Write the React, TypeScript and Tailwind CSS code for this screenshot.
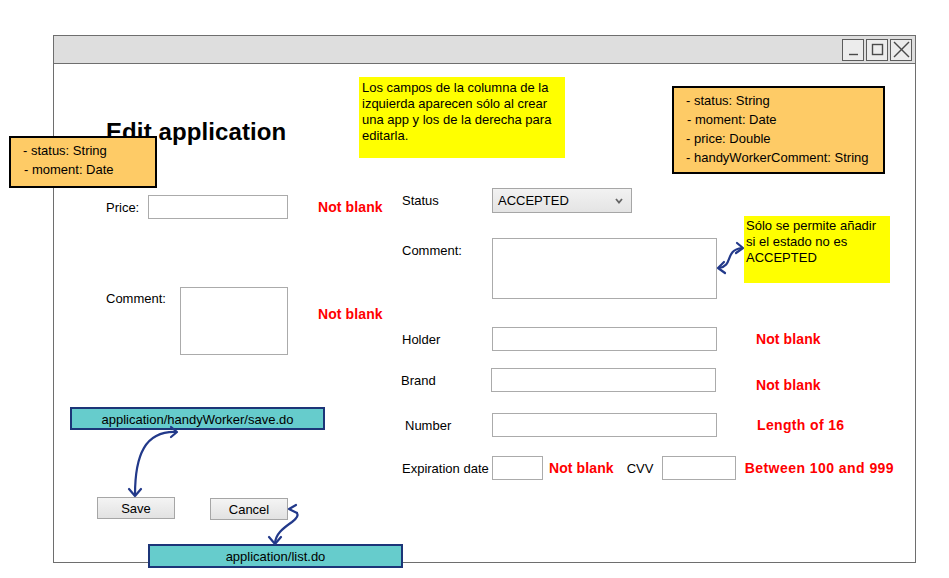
import React from 'react'

const navy = '#22398a'

function TitleButton({ children }: { children: React.ReactNode }) {
  return (
    <div className="w-[22px] h-[22px] border-[1.5px] border-[#5c5c5c] bg-[#ececec] flex items-center justify-center">
      <svg width="19" height="19" viewBox="0 0 19 19" fill="none" stroke="#4a4a4a" strokeWidth="1.4">
        {children}
      </svg>
    </div>
  )
}

function Field({ className }: { className: string }) {
  return <div className={`border border-[#ababab] bg-white ${className}`} />
}

function Arrows() {
  return (
    <svg className="absolute left-0 top-0 pointer-events-none" width="949" height="578" fill="none" stroke={navy} strokeWidth="2.2" strokeLinecap="round" strokeLinejoin="round">
      {/* save.do <-> Save */}
      <path d="M176 432 C145 431 135 455 135 495" />
      <polyline points="171,427 177,432 171,437" />
      <polyline points="129,489 135,496 141,489" />
      {/* Cancel <-> list.do */}
      <polyline points="296,505 289,509 297,513" />
      <path d="M297 513 C299 516 296 519 292 522 C282 529 276 534 275 543" />
      <polyline points="269,537 275,544 281,537" />
      {/* comment <-> note */}
      <path d="M719 268 C734 266 724 250 742 248" />
      <polyline points="724,262 718,268 725,273" />
      <polyline points="737,243 743,248 736,253" />
    </svg>
  )
}

export default function App() {
  return (
    <div className="relative w-[949px] h-[578px] overflow-hidden bg-white pt-[35px] pl-[53px] font-['Liberation_Sans',Arial,sans-serif] text-[13px] leading-[16px] text-black">
      {/* Window */}
      <div className="w-[863px] h-[528px] border border-[#6e6e6e] flex flex-col">
        <div className="h-[28px] bg-[#dedede] border-b border-[#6e6e6e] flex items-center justify-end gap-[2px] pr-[3px]">
          <TitleButton>
            <line x1="5" y1="14.5" x2="14" y2="14.5" />
          </TitleButton>
          <TitleButton>
            <rect x="4.5" y="4.5" width="10" height="10" />
          </TitleButton>
          <TitleButton>
            <line x1="2" y1="2" x2="17" y2="17" />
            <line x1="17" y1="2" x2="2" y2="17" />
          </TitleButton>
        </div>

        <div className="flex flex-1">
          {/* Left column */}
          <div className="w-[341px] flex flex-col">
            <h1 className="mt-[54px] ml-[52px] text-[24px] leading-[28px] font-bold tracking-[0.1px]">Edit application</h1>
            <div className="mt-[49px] ml-[52px] flex items-center h-[24px]">
              <span className="w-[42px] pt-[1px]">Price:</span>
              <Field className="w-[140px] h-[24px]" />
              <span className="ml-[30px] text-[14px] font-bold text-[#ff0000] tracking-[0.1px]">Not blank</span>
            </div>
            <div className="mt-[68px] ml-[52px] flex items-start">
              <span className="w-[74px] mt-[4px]">Comment:</span>
              <Field className="w-[108px] h-[68px]" />
              <span className="ml-[30px] mt-[19px] text-[14px] font-bold text-[#ff0000] tracking-[0.1px]">Not blank</span>
            </div>
            <div className="mt-[142px] ml-[43px] flex items-start">
              <button className="w-[78px] h-[22px] pt-[2px] border border-[#a6a6a6] bg-gradient-to-b from-[#f4f4f4] to-[#e2e2e2]">Save</button>
              <button className="ml-[35px] mt-[1px] w-[78px] h-[22px] pt-[2px] border border-[#a6a6a6] bg-gradient-to-b from-[#f4f4f4] to-[#e2e2e2]">Cancel</button>
            </div>
          </div>

          {/* Right column */}
          <div className="flex-1 flex flex-col pl-[7px]">
            <div className="mt-[124px] flex items-center h-[25px]">
              <span className="w-[90px]">Status</span>
              <div className="w-[140px] h-[25px] border border-[#a6a6a6] bg-gradient-to-b from-[#f2f2f2] to-[#e4e4e4] flex items-center justify-between pl-[5px] pr-[8px]">
                <span className="pt-[1px]">ACCEPTED</span>
                <svg width="8" height="6" viewBox="0 0 8 6" fill="none" stroke="#666" strokeWidth="1.8">
                  <polyline points="1,1 4,4.5 7,1" />
                </svg>
              </div>
            </div>
            <div className="mt-[25px] flex items-start">
              <span className="w-[90px] mt-[5px]">Comment:</span>
              <Field className="w-[225px] h-[61px]" />
            </div>
            <div className="mt-[28px] flex items-center h-[24px]">
              <span className="w-[90px] pt-[1px]">Holder</span>
              <Field className="w-[225px] h-[24px]" />
              <span className="ml-[39px] text-[14px] font-bold text-[#ff0000] tracking-[0.1px]">Not blank</span>
            </div>
            <div className="mt-[17px] -ml-[1px] flex items-center h-[24px]">
              <span className="w-[90px] pt-[1px]">Brand</span>
              <Field className="w-[225px] h-[24px]" />
              <span className="ml-[40px] mt-[10px] text-[14px] font-bold text-[#ff0000] tracking-[0.1px]">Not blank</span>
            </div>
            <div className="mt-[21px] flex items-center h-[24px]">
              <span className="ml-[3px] w-[87px] pt-[1px]">Number</span>
              <Field className="w-[225px] h-[24px]" />
              <span className="ml-[40px] text-[14px] font-bold text-[#ff0000] tracking-[0.35px]">Length of 16</span>
            </div>
            <div className="mt-[19px] flex items-center h-[24px] whitespace-nowrap">
              <span className="w-[90px] pt-[1px]">Expiration date</span>
              <Field className="w-[51px] h-[24px]" />
              <span className="ml-[6px] text-[14px] font-bold text-[#ff0000] tracking-[0.1px]">Not blank</span>
              <span className="ml-[13px] w-[35px] pt-[1px]">CVV</span>
              <Field className="w-[74px] h-[24px]" />
              <span className="ml-[9px] text-[14px] font-bold text-[#ff0000] tracking-[0.45px]">Between 100 and 999</span>
            </div>
          </div>
        </div>
      </div>

      {/* Annotations */}
      <div className="absolute left-[9px] top-[136px] w-[148px] h-[52px] border-2 border-black bg-[#fecb66] pl-[12px] pt-[3px] leading-[19px]">
        <div>- status: String</div>
        <div className="pl-[1px]">- moment: Date</div>
      </div>

      <div className="absolute left-[672px] top-[86px] w-[213px] h-[88px] border-2 border-black bg-[#fecb66] pl-[12px] pt-[3px] leading-[19px]">
        <div>- status: String</div>
        <div className="pl-[1px]">- moment: Date</div>
        <div>- price: Double</div>
        <div>- handyWorkerComment: String</div>
      </div>

      <div className="absolute left-[359px] top-[77px] w-[206px] h-[81px] bg-[#ffff00] pl-[3px] pt-[3px]">
        Los campos de la columna de la<br />
        izquierda aparecen sólo al crear<br />
        una app y los de la derecha para<br />
        editarla.
      </div>

      <div className="absolute left-[744px] top-[216px] w-[146px] h-[67px] bg-[#ffff00] pl-[2px] pt-[2px]">
        Sólo se permite añadir<br />
        si el estado no es<br />
        ACCEPTED
      </div>

      <div className="absolute left-[70px] top-[407px] w-[255px] h-[23px] pt-[2px] border-2 border-[#1c3578] bg-[#66cccc] flex items-center justify-center">
        application/handyWorker/save.do
      </div>

      <div className="absolute left-[148px] top-[544px] w-[255px] h-[24px] pt-[2px] border-2 border-[#1c3578] bg-[#66cccc] flex items-center justify-center">
        application/list.do
      </div>

      <Arrows />
    </div>
  )
}
